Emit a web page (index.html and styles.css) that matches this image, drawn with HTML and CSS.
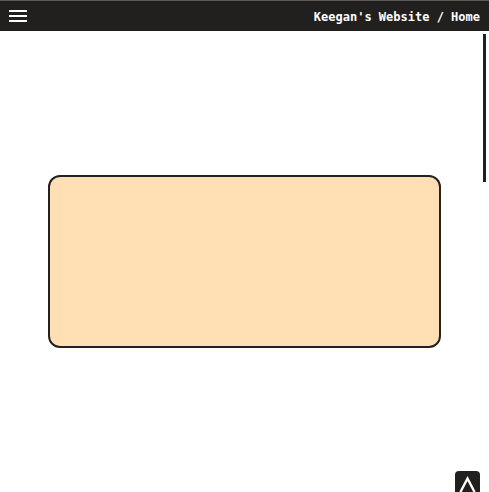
FILE: index.html
```html
<!DOCTYPE html>
<html>
<head>
<meta charset="utf-8">
<link rel="stylesheet" href="styles.css">
</head>
<body>
<header class="topbar">
  <button class="menu" aria-label="Menu">
    <span></span><span></span><span></span>
  </button>
  <div class="title">Keegan's Website / Home</div>
</header>
<main class="main">
  <div class="card"></div>
</main>
<div class="scroll-thumb"></div>
<button class="to-top" aria-label="Back to top">
  <svg width="25" height="21" viewBox="0 0 25 21"><path d="M6 18 L12.5 5.5 L19 18" fill="none" stroke="#fff" stroke-width="2.4" stroke-linecap="square"/></svg>
</button>
</body>
</html>
```
FILE: styles.css
```css
html, body {
  margin: 0;
  padding: 0;
  background: #fff;
  height: 100%;
  overflow: hidden;
}
body {
  font-family: "DejaVu Sans Mono", "Liberation Mono", monospace;
}
.topbar {
  height: 30px;
  background: #21201e;
  border-top: 1px solid #5a5a58;
  display: flex;
  align-items: center;
  justify-content: space-between;
  padding: 0 9px;
}
.menu {
  display: flex;
  flex-direction: column;
  gap: 3px;
  width: 18px;
  padding: 0;
  margin: 0;
  border: 0;
  background: none;
}
.menu span {
  display: block;
  height: 2px;
  background: #fff;
}
.title {
  color: #fff;
  font-weight: bold;
  font-size: 12px;
  padding-top: 2px;
}
.main {
  display: flex;
  justify-content: center;
  padding-top: 144px;
}
.card {
  width: 389px;
  height: 169px;
  background: #ffdfb3;
  border: 2px solid #242220;
  border-radius: 12px;
}
.scroll-thumb {
  position: fixed;
  right: 3px;
  top: 34px;
  width: 3px;
  height: 148px;
  background: #21201e;
}
.to-top {
  position: fixed;
  left: 455px;
  top: 471px;
  width: 25px;
  height: 24px;
  padding: 0;
  border: 0;
  background: #21201e;
  border-radius: 4px;
  display: block;
}
.to-top svg {
  display: block;
}
```
